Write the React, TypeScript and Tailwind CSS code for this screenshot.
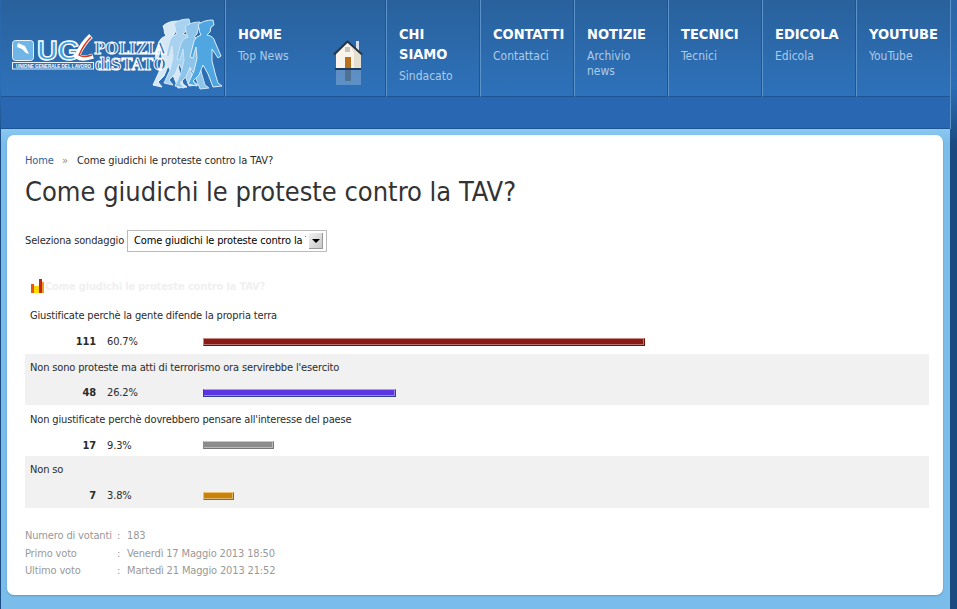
import React from "react";

const menu = [
  { title: ["CHI", "SIAMO"], sub: ["Sindacato"] },
  { title: ["CONTATTI"], sub: ["Contattaci"] },
  { title: ["NOTIZIE"], sub: ["Archivio", "news"] },
  { title: ["TECNICI"], sub: ["Tecnici"] },
  { title: ["EDICOLA"], sub: ["Edicola"] },
  { title: ["YOUTUBE"], sub: ["YouTube"] },
];

const votes = [
  {
    q: "Giustificate perchè la gente difende la propria terra",
    n: 111,
    pct: "60.7%",
    w: "w-[442px]",
    row: "h-[51px] pt-[4px]",
    gap: "mt-[10px]",
    shift: "mb-[2px]",
    bar: "bg-[#8a1a14] border-t-[#c98a85] border-l-[#c98a85] border-r-[#6e0f0b] border-b-[#6e0f0b]",
  },
  {
    q: "Non sono proteste ma atti di terrorismo ora servirebbe l'esercito",
    n: 48,
    pct: "26.2%",
    w: "w-[193px]",
    row: "h-[51px] pt-[5px] bg-[#f1f1f1]",
    gap: "mt-[9px]",
    shift: "mb-[2px]",
    bar: "bg-[#5a35e0] border-t-[#9fa8e8] border-l-[#2f3f9a] border-r-[#2f3f9a] border-b-[#2f3f9a]",
  },
  {
    q: "Non giustificate perchè dovrebbero pensare all'interesse del paese",
    n: 17,
    pct: "9.3%",
    w: "w-[71px]",
    row: "h-[51px] pt-[6px]",
    gap: "mt-[10px]",
    shift: "mb-[4px]",
    bar: "bg-[#8c8c8c] border-t-[#c8c8c8] border-l-[#8c8c8c] border-r-[#777777] border-b-[#777777]",
  },
  {
    q: "Non so",
    n: 7,
    pct: "3.8%",
    w: "w-[31px]",
    row: "h-[52px] pt-[5px] bg-[#f1f1f1]",
    gap: "mt-[10px]",
    shift: "mb-[2px]",
    bar: "bg-[#c8830c] border-t-[#f0c070] border-l-[#f0c070] border-r-[#a8640a] border-b-[#a8640a]",
  },
];

const PERSON =
  "M10 5 Q15 0 25 0 L26 5 L23 7 Q23 13 19 15 Q26 16 27 22 L33 36 L30 38 L24 29 L24 41 L27 53 L30 63 L34 66 L25 67 L20 54 L15 45 L11 55 L5 61 L9 66 L0 64 L6 51 L9 38 L8 27 L5 38 L2 37 L6 21 Q8 16 13 15 Q11 12 11 8 Z";

const Logo = () => (
  <svg width="225" height="96" viewBox="0 0 225 96" className="block">
    <path d={PERSON} transform="translate(152 21)" fill="#d6e8f6" stroke="#e8f3fb" strokeWidth="1" />
    <path d={PERSON} transform="translate(163 19)" fill="#a8d2f0" stroke="#d8ebf8" strokeWidth="1" />
    <path d={PERSON} transform="translate(174 22)" fill="#8cc4ea" stroke="#cfe6f7" strokeWidth="1" />
    <path d={PERSON} transform="translate(187 20)" fill="#4fa6e0" stroke="#dcedf9" strokeWidth="1" />
    <rect x="11.5" y="40.5" width="21" height="20" rx="3" fill="#6fb6e6" stroke="#e6f2fb" />
    <path d="M17 43 L24 46 L28 54 L25 53 L21 49 L16 47 Z" fill="#ffffff" />
    <text x="36" y="60" fontFamily="'Liberation Sans', sans-serif" fontWeight="700" fontSize="28" fill="#3f9fe0" stroke="#ffffff" strokeWidth="1.4" textLength="43" lengthAdjust="spacingAndGlyphs">UG</text>
    <path d="M90 36 Q82 43 76 56 Q81 60 92 56" fill="none" stroke="#ffffff" strokeWidth="5.5" />
    <path d="M90 37 Q83 44 78 55 Q82 58 91 55" fill="none" stroke="#e0341c" strokeWidth="1.5" />
    <rect x="11.5" y="62.5" width="81" height="6.5" fill="#2f75bd" stroke="#e6f2fb" />
    <text x="15" y="67.8" fontFamily="'Liberation Sans', sans-serif" fontWeight="700" fontSize="5" fill="#ffffff" textLength="75" lengthAdjust="spacingAndGlyphs">UNIONE GENERALE DEL LAVORO</text>
    <text x="93" y="54" fontFamily="'DejaVu Serif', serif" fontWeight="700" fontSize="17" fill="#2a6fb8" stroke="#ffffff" strokeWidth="1.1" textLength="72" lengthAdjust="spacingAndGlyphs">POLIZIA</text>
    <text x="94" y="70" fontFamily="'DejaVu Serif', serif" fontWeight="700" fontSize="17" fill="#2a6fb8" stroke="#ffffff" strokeWidth="1.1" textLength="71" lengthAdjust="spacingAndGlyphs">diSTATO</text>
  </svg>
);

const House = () => (
  <svg width="30" height="47" viewBox="0 0 30 47" className="block">
    <g opacity="0.28">
      <rect x="3" y="31" width="25" height="15" fill="#dbe5f0" />
      <rect x="12" y="31" width="6" height="11" fill="#a87a3c" />
    </g>
    <rect x="23" y="2" width="3" height="11" fill="#d5dfe9" />
    <path d="M3 15 L14.5 3 L28 15 V29 H3 Z" fill="#f8f4ec" />
    <path d="M18 8 L28 15 V29 H21 V14 Z" fill="#ddd5c6" opacity="0.7" />
    <path d="M1 15.5 L14.5 2.5 L29 15.5" fill="none" stroke="#2a3340" strokeWidth="2" />
    <rect x="12" y="8" width="5" height="5" fill="#c9c4ba" />
    <rect x="12" y="18" width="6" height="11" fill="#b8701c" />
    <rect x="2" y="29" width="26" height="2" fill="#1b3a66" />
  </svg>
);

const NavCell = ({ title, sub }: { title: string[]; sub: string[] }) => (
  <div className="w-[94px] h-[97px] pt-[24px] pl-[12px] border-l border-l-[#5d93cb] border-b border-b-[#1f5592] shadow-[-1px_0_0_#1f5592]">
    {title.map((t) => (
      <div key={t} className="text-[14.5px] leading-5 font-bold text-white">{t}</div>
    ))}
    <div className="mt-[5px]">
      {sub.map((s) => (
        <div key={s} className="text-[12px] leading-[15px] text-[#aecbe8]">{s}</div>
      ))}
    </div>
  </div>
);

const App = () => {
  return (
    <div className="min-h-[609px] bg-gradient-to-b from-[#2a66a8] via-[#2c6eb6] via-[14%] to-[#1a4a80] to-[24%] pl-px font-['DejaVu_Sans_Condensed','DejaVu_Sans',sans-serif] text-[11px] tracking-[-0.15px]">
      <div className="w-[949px] h-[609px] flex flex-col bg-[#7bbdea]">
        <header className="flex h-[97px] tracking-normal bg-gradient-to-b from-[#29619c] to-[#2e72bb] shadow-[1px_0_0_#5d93cb]">
          <div className="w-[224px] border-b border-b-[#1f5592]">
            <Logo />
          </div>
          <div className="w-[161px] h-[97px] flex border-l border-l-[#5d93cb] border-b border-b-[#1f5592] shadow-[-1px_0_0_#1f5592]">
            <div className="pt-[24px] pl-[12px]">
              <div className="text-[14.5px] leading-5 font-bold text-white">HOME</div>
              <div className="mt-[5px] text-[12px] leading-[15px] text-[#aecbe8]">Top News</div>
            </div>
            <div className="ml-auto mr-[23px] mt-[39px]">
              <House />
            </div>
          </div>
          {menu.map((m, i) => (
            <NavCell key={i} title={m.title} sub={m.sub} />
          ))}
        </header>
        <div className="h-[32px] bg-[#2a67b2] border-b border-b-[#1d5590] shadow-[1px_0_0_#5d93cb]" />
        <div className="flex-1 pt-[6px] px-[6px] bg-gradient-to-b from-[#8ac8f0] to-[#7bbdea] to-[3%]">
          <main className="h-[460px] w-[936px] rounded-[7px] bg-white shadow-[0_1px_2px_#5c9cc8] pt-[18px] pl-[18px] pr-[14px] text-[#2b2b2b]">
            <nav className="h-[15px] flex items-center leading-[15px] tracking-[-0.1px]">
              <span className="w-[37px] text-[#2d5f9e]">Home</span>
              <span className="w-[15px] text-[#888888]">»</span>
              <span>Come giudichi le proteste contro la TAV?</span>
            </nav>
            <h1 className="mt-[5px] text-[27px] leading-[38px] font-normal tracking-normal text-[#333333]">Come giudichi le proteste contro la TAV?</h1>
            <div className="mt-[19px] flex items-center h-[22px]">
              <span className="w-[102px]">Seleziona sondaggio</span>
              <div className="w-[200px] h-[22px] border border-[#bbbbbb] flex items-center pl-[6px] pr-[3px]">
                <span className="w-[172px] overflow-hidden whitespace-nowrap text-black">Come giudichi le proteste contro la TAV?</span>
                <span className="ml-auto w-[14px] h-[16px] bg-gradient-to-br from-[#f2f2f2] to-[#c8c8c8] border-r border-b border-r-[#999999] border-b-[#999999] flex items-center justify-center">
                  <span className="w-0 h-0 border-l-[4px] border-r-[4px] border-t-[4px] border-l-transparent border-r-transparent border-t-black" />
                </span>
              </div>
            </div>
            <div className="mt-[28px] ml-[6px] h-[15px] flex items-end">
              <svg width="13" height="14" viewBox="0 0 13 14" className="block mb-[2px]">
                <rect x="0" y="5" width="3" height="9" fill="#e8560f" />
                <rect x="3" y="7" width="5" height="7" fill="#ffd800" />
                <rect x="8" y="0" width="3" height="14" fill="#c8201a" />
                <rect x="11" y="3" width="2" height="11" fill="#f0a020" />
              </svg>
              <span className="ml-[1px] font-bold text-[#f0f0f0]">Come giudichi le proteste contro la TAV?</span>
            </div>
            <div className="mt-[8px]">
              {votes.map((v, i) => (
                <div key={i} className={`${v.row} pl-[5px]`}>
                  <div className="h-[17px] leading-[17px]">{v.q}</div>
                  <div className={`${v.gap} h-[17px] flex items-center`}>
                    <span className="w-[66px] text-right font-bold">{v.n}</span>
                    <span className="ml-[11px] w-[96px]">{v.pct}</span>
                    <span className={`${v.w} ${v.shift} h-[8px] border shadow-[inset_-1px_-1px_0_#ffffff66] ${v.bar}`} />
                  </div>
                </div>
              ))}
            </div>
            <div className="mt-[19px] grid grid-cols-[92px_10px_1fr] whitespace-nowrap text-[#999999] leading-[17.5px]">
              <span>Numero di votanti</span><span>:</span><span>183</span>
              <span>Primo voto</span><span>:</span><span>Venerdì 17 Maggio 2013 18:50</span>
              <span>Ultimo voto</span><span>:</span><span>Martedì 21 Maggio 2013 21:52</span>
            </div>
          </main>
        </div>
      </div>
    </div>
  );
};

export default App;
